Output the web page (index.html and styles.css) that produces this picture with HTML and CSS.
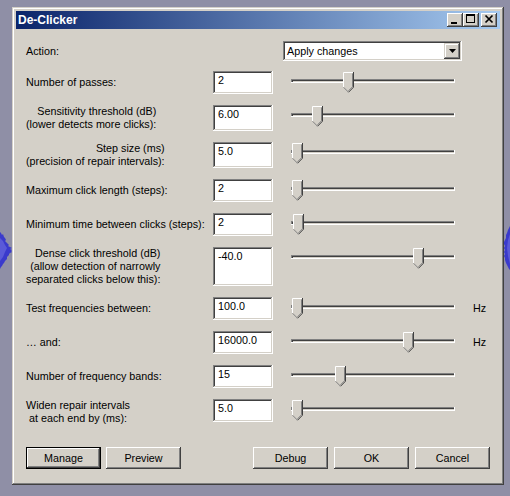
FILE: index.html
```html
<!DOCTYPE html>
<html>
<head>
<meta charset="utf-8">
<title>De-Clicker</title>
<link rel="stylesheet" href="styles.css">
</head>
<body>
<svg class="defs" width="0" height="0">
  <symbol id="thumb" viewBox="0 0 11 21">
    <path d="M0 0H11V15L5.5 20.5L0 15Z" fill="#d4d0c8"/>
    <path d="M0.5 15V0.5H10" stroke="#ffffff" fill="none"/>
    <path d="M10.5 0V15.2L5.5 20.3" stroke="#404040" fill="none"/>
    <path d="M9.5 1.5V14.8L5.5 18.8" stroke="#808080" fill="none"/>
    <path d="M0.6 15.3L5.4 20.1" stroke="#808080" fill="none"/>
  </symbol>
</svg>

<svg class="wave wave-left" width="13" height="46" viewBox="0 0 13 46">
  <polygon points="0,6 1,7 2,9 3,8 4,11 5,12 6,14 5,15 7,17 8,18 9,19 8,20 10,21 12,22 10,23 12,24 11,25 12,26 10,27 9,28 9,29 8,30 7,31 7,33 6,34 5,35 4,37 3,38 2,40 1,41 0,43" fill="#3a3acc"/>
  <polygon points="0,12 3,15 5,19 7,22 5,26 3,31 0,35" fill="#5a5ad8"/>
</svg>
<svg class="wave wave-right" width="7" height="50" viewBox="0 0 7 50">
  <polygon points="7,2 6,4 5,6 4,9 3,11 3,14 2,16 1,18 1,20 2,22 1,24 2,26 1,28 2,30 1,32 2,34 2,36 3,39 4,41 5,43 6,45 7,46" fill="#3a3acc"/>
  <polygon points="7,10 5,16 4,24 5,32 7,40" fill="#5a5ad8"/>
</svg>

<div class="window">
  <div class="titlebar">
    <span class="title">De-Clicker</span>
    <div class="tbtns">
      <span class="tbtn"><svg width="16" height="14" viewBox="0 0 16 14"><rect x="4" y="9" width="6" height="2" fill="#000"/></svg></span>
      <span class="tbtn"><svg width="16" height="14" viewBox="0 0 16 14"><path d="M3 1h9v9h-9z M4 3v6h7v-6z" fill="#000" fill-rule="evenodd"/></svg></span>
      <span class="tbtn close"><svg width="16" height="14" viewBox="0 0 16 14"><path d="M4.5 2.5L11.5 9.5M11.5 2.5L4.5 9.5" stroke="#000" stroke-width="1.7" fill="none"/></svg></span>
    </div>
  </div>

  <div class="client">
    <div class="action-row">
      <span class="action-label">Action:</span>
      <div class="combo">
        <span class="combo-text">Apply changes</span>
        <span class="combo-btn"><svg width="7" height="4" viewBox="0 0 7 4"><polygon points="0,0 7,0 3.5,4" fill="#000"/></svg></span>
      </div>
    </div>

    <div class="rows">
      <div class="row h23">
        <div class="label">Number of passes:</div>
        <div class="field">2</div>
        <div class="slider"><div class="track"></div><svg class="thumb" style="left:52px"><use href="#thumb"/></svg></div>
      </div>

      <div class="row h26">
        <div class="label"><span class="ml right">Sensitivity threshold (dB)<br>(lower detects more clicks):</span></div>
        <div class="field">6.00</div>
        <div class="slider"><div class="track"></div><svg class="thumb" style="left:21px"><use href="#thumb"/></svg></div>
      </div>

      <div class="row h26">
        <div class="label"><span class="ml right">Step size (ms)<br>(precision of repair intervals):</span></div>
        <div class="field">5.0</div>
        <div class="slider"><div class="track"></div><svg class="thumb" style="left:1px"><use href="#thumb"/></svg></div>
      </div>

      <div class="row h23">
        <div class="label">Maximum click length (steps):</div>
        <div class="field">2</div>
        <div class="slider"><div class="track"></div><svg class="thumb" style="left:1px"><use href="#thumb"/></svg></div>
      </div>

      <div class="row h23">
        <div class="label">Minimum time between clicks (steps):</div>
        <div class="field">2</div>
        <div class="slider"><div class="track"></div><svg class="thumb" style="left:2px"><use href="#thumb"/></svg></div>
      </div>

      <div class="row h39">
        <div class="label"><span class="ml right">Dense click threshold (dB)<br>(allow detection of narrowly<br>separated clicks below this):</span></div>
        <div class="field">-40.0</div>
        <div class="slider"><div class="track"></div><svg class="thumb" style="left:122px"><use href="#thumb"/></svg></div>
      </div>

      <div class="row h23">
        <div class="label">Test frequencies between:</div>
        <div class="field">100.0</div>
        <div class="slider"><div class="track"></div><svg class="thumb" style="left:1px"><use href="#thumb"/></svg></div>
        <div class="unit">Hz</div>
      </div>

      <div class="row h23">
        <div class="label">… and:</div>
        <div class="field">16000.0</div>
        <div class="slider"><div class="track"></div><svg class="thumb" style="left:112px"><use href="#thumb"/></svg></div>
        <div class="unit">Hz</div>
      </div>

      <div class="row h23">
        <div class="label">Number of frequency bands:</div>
        <div class="field">15</div>
        <div class="slider"><div class="track"></div><svg class="thumb" style="left:44px"><use href="#thumb"/></svg></div>
      </div>

      <div class="row h26">
        <div class="label"><span class="ml center">Widen repair intervals<br>at each end by (ms):</span></div>
        <div class="field short">5.0</div>
        <div class="slider"><div class="track"></div><svg class="thumb" style="left:1px"><use href="#thumb"/></svg></div>
      </div>
    </div>

    <div class="buttons">
      <div class="group left">
        <button class="btn default">Manage</button>
        <button class="btn">Preview</button>
      </div>
      <div class="group right">
        <button class="btn">Debug</button>
        <button class="btn">OK</button>
        <button class="btn">Cancel</button>
      </div>
    </div>
  </div>
</div>
</body>
</html>
```

FILE: styles.css
```css
* {
  box-sizing: border-box;
}

html, body {
  margin: 0;
  padding: 0;
}

body {
  position: relative;
  width: 510px;
  height: 496px;
  overflow: hidden;
  background: #8f8fa6;
  padding: 7px 0 0 12px;
  font-family: "Liberation Sans", Arial, sans-serif;
  font-size: 10.75px;
  color: #000;
}

.defs {
  position: absolute;
  width: 0;
  height: 0;
}

.wave {
  position: absolute;
  display: block;
}

.wave-left {
  left: 0;
  top: 226px;
}

.wave-right {
  left: 503px;
  top: 224px;
}

.window {
  width: 492px;
  height: 478px;
  background: #d4d0c8;
  padding: 4px;
  box-shadow: inset -1px -1px #404040, inset 1px 1px #d4d0c8, inset -2px -2px #808080, inset 2px 2px #ffffff;
  display: flex;
  flex-direction: column;
}

.titlebar {
  height: 18px;
  flex: none;
  background: linear-gradient(to right, #0a246a, #a6caf0);
  display: flex;
  align-items: center;
  padding: 0 3px 0 2px;
}

.title {
  flex: 1;
  color: #fff;
  font-weight: bold;
  font-size: 12px;
  line-height: 14px;
}

.tbtns {
  display: flex;
}

.tbtn {
  width: 16px;
  height: 14px;
  background: #d4d0c8;
  box-shadow: inset -1px -1px #404040, inset 1px 1px #ffffff, inset -2px -2px #808080, inset 2px 2px #d4d0c8;
  display: block;
}

.tbtn svg {
  display: block;
}

.tbtn.close {
  margin-left: 2px;
}

.client {
  flex: 1;
  padding: 12px 10px 0 10px;
}

.action-row {
  display: flex;
  align-items: center;
  height: 20px;
}

.action-label {
  width: 257px;
  line-height: 13px;
}

.combo {
  width: 179px;
  height: 20px;
  background: #fff;
  box-shadow: inset -1px -1px #ffffff, inset 1px 1px #808080, inset -2px -2px #d4d0c8, inset 2px 2px #404040;
  display: flex;
  align-items: center;
  padding: 2px;
}

.combo-text {
  flex: 1;
  padding-left: 2px;
  line-height: 13px;
}

.combo-btn {
  width: 16px;
  height: 16px;
  background: #d4d0c8;
  box-shadow: inset -1px -1px #404040, inset 1px 1px #d4d0c8, inset -2px -2px #808080, inset 2px 2px #ffffff;
  display: flex;
  align-items: center;
  justify-content: center;
}

.combo-btn svg {
  display: block;
}

.rows {
  margin-top: 10px;
  display: flex;
  flex-direction: column;
  gap: 11px;
}

.row {
  display: flex;
  align-items: center;
}

.h23 { height: 23px; }
.h26 { height: 26px; }
.h39 { height: 39px; }

.label {
  width: 187px;
  flex: none;
  line-height: 13px;
  white-space: nowrap;
}

.ml {
  display: inline-block;
}

.ml.right { text-align: right; }
.ml.center { text-align: center; }

.field {
  width: 60px;
  height: 100%;
  flex: none;
  background: #fff;
  box-shadow: inset -1px -1px #ffffff, inset 1px 1px #808080, inset -2px -2px #d4d0c8, inset 2px 2px #404040;
  padding: 3px 4px 0 5px;
  line-height: 13px;
  align-self: flex-start;
}

.field.short {
  height: 23px;
}

.slider {
  position: relative;
  width: 164px;
  height: 23px;
  margin-left: 18px;
  flex: none;
  align-self: flex-start;
}

.track {
  margin-top: 8px;
  height: 4px;
  background: #d4d0c8;
  box-shadow: inset -1px -1px #ffffff, inset 1px 1px #808080, inset 2px 2px #404040;
}

.thumb {
  position: absolute;
  top: 1px;
  width: 11px;
  height: 21px;
  display: block;
}

.unit {
  margin-left: 18px;
  line-height: 13px;
}

.buttons {
  margin-top: 22px;
  display: flex;
  justify-content: space-between;
}

.group {
  display: flex;
}

.group.left { gap: 5px; }
.group.right { gap: 6px; }

.btn {
  width: 75px;
  height: 22px;
  border: 0;
  padding: 0;
  margin: 0;
  font-family: inherit;
  font-size: 10.75px;
  color: #000;
  background: #d4d0c8;
  box-shadow: inset -1px -1px #404040, inset 1px 1px #ffffff, inset -2px -2px #808080, inset 2px 2px #d4d0c8;
  display: flex;
  align-items: center;
  justify-content: center;
  line-height: 13px;
}

.btn.default {
  box-shadow: inset 0 0 0 1px #000000, inset -2px -2px #404040, inset 2px 2px #ffffff, inset -3px -3px #808080;
}
```
